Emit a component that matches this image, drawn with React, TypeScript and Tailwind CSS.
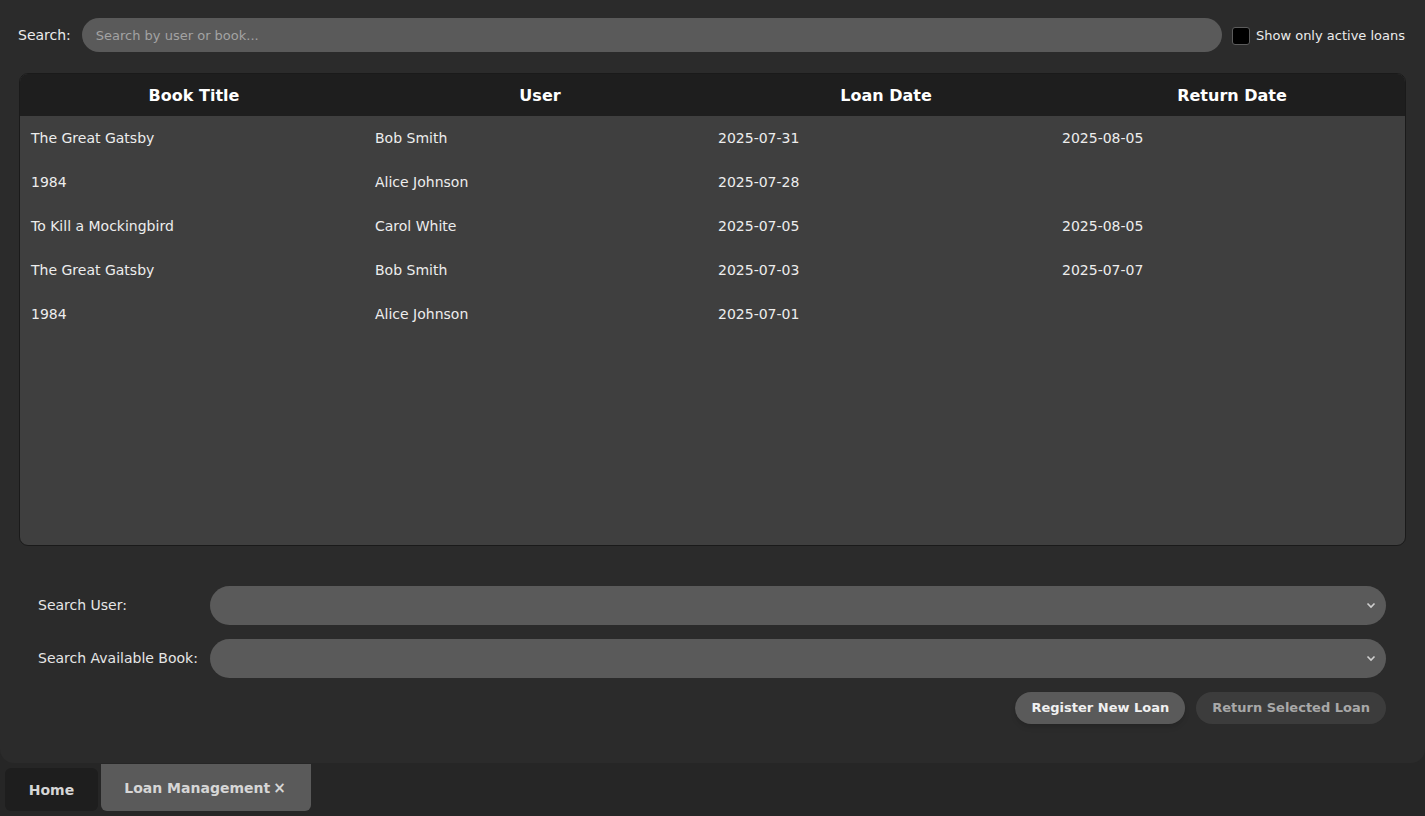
import React from 'react';

const loans = [
  { title: 'The Great Gatsby', user: 'Bob Smith', loan: '2025-07-31', ret: '2025-08-05' },
  { title: '1984', user: 'Alice Johnson', loan: '2025-07-28', ret: '' },
  { title: 'To Kill a Mockingbird', user: 'Carol White', loan: '2025-07-05', ret: '2025-08-05' },
  { title: 'The Great Gatsby', user: 'Bob Smith', loan: '2025-07-03', ret: '2025-07-07' },
  { title: '1984', user: 'Alice Johnson', loan: '2025-07-01', ret: '' },
];

function Chevron() {
  return (
    <svg width="10" height="7" viewBox="0 0 10 7" fill="none" stroke="#cfcfcf" strokeWidth="1.6">
      <path d="M1.5 1.5L5 5L8.5 1.5" />
    </svg>
  );
}

function ComboRow({ label }: { label: string }) {
  return (
    <div className="flex items-center">
      <span className="w-[172px] text-[14px] text-[#e6e6e6]">{label}</span>
      <div className="flex h-[39px] flex-1 items-center justify-end rounded-full bg-[#5a5a5a] pr-[10px]">
        <Chevron />
      </div>
    </div>
  );
}

export default function App() {
  return (
    <div
      className="flex h-screen flex-col bg-[#262626]"
      style={{ fontFamily: '"DejaVu Sans", sans-serif' }}
    >
      <div className="flex flex-1 flex-col rounded-b-[14px] bg-[#2b2b2b] pl-[18px] pr-[19px] pt-[18px]">
        {/* search bar */}
        <div className="flex items-center pr-[1px]">
          <span className="mr-[11px] pt-[1px] text-[14px] text-[#ececec]">Search:</span>
          <div className="flex h-[34px] flex-1 items-center rounded-full bg-[#5a5a5a] px-[14px] pt-[1px] text-[13px] text-[#a3a3a3]">
            Search by user or book...
          </div>
          <label className="ml-[10px] flex items-center gap-[6px] pt-[1px] text-[13px] text-[#ececec]">
            <span className="h-[18px] w-[18px] rounded-[3px] border border-[#5c5c5c] bg-black" />
            Show only active loans
          </label>
        </div>

        {/* table */}
        <div className="ml-[1px] mt-[21px] h-[473px] overflow-hidden rounded-[9px] border border-[#1a1a1a] bg-[#3f3f3f]">
          <div className="grid h-[42px] grid-cols-4 items-center bg-[#1e1e1e] pl-[1px] pt-[1px] text-center text-[16px] font-bold text-white">
            <span>Book Title</span>
            <span>User</span>
            <span>Loan Date</span>
            <span>Return Date</span>
          </div>
          {loans.map((l, i) => (
            <div key={i} className="grid h-[44px] grid-cols-[344px_343px_344px_1fr] items-center pl-[11px] text-[14px] text-[#ededed]">
              <span>{l.title}</span>
              <span>{l.user}</span>
              <span>{l.loan}</span>
              <span>{l.ret}</span>
            </div>
          ))}
        </div>

        {/* form */}
        <div className="mt-[40px] flex flex-col gap-[14px] pl-[20px] pr-[20px]">
          <ComboRow label="Search User:" />
          <ComboRow label="Search Available Book:" />
          <div className="flex justify-end gap-[11px]">
            <button className="h-[32px] rounded-full bg-[#5a5a5a] px-[16px] text-[13px] font-bold text-[#f0f0f0] shadow-md">
              Register New Loan
            </button>
            <button className="h-[32px] rounded-full bg-[#3c3c3c] px-[16px] text-[13px] font-bold text-[#a8a8a8]">
              Return Selected Loan
            </button>
          </div>
        </div>
      </div>

      {/* tabs */}
      <div className="flex h-[53px] items-end gap-[3px] px-[5px] pb-[5px]">
        <div className="flex h-[43px] w-[93px] items-center justify-center rounded-[6px] bg-[#1e1e1e] pt-[1px] text-[14px] font-bold text-[#d6d6d6]">
          Home
        </div>
        <div className="flex h-[47px] w-[210px] items-center justify-center rounded-b-[6px] bg-[#5a5a5a] pr-[2px] pt-[2px] text-[14px] font-bold text-[#d6d6d6]">
          Loan Management
          <span className="ml-[3px] text-[15px] font-bold">×</span>
        </div>
      </div>
    </div>
  );
}
